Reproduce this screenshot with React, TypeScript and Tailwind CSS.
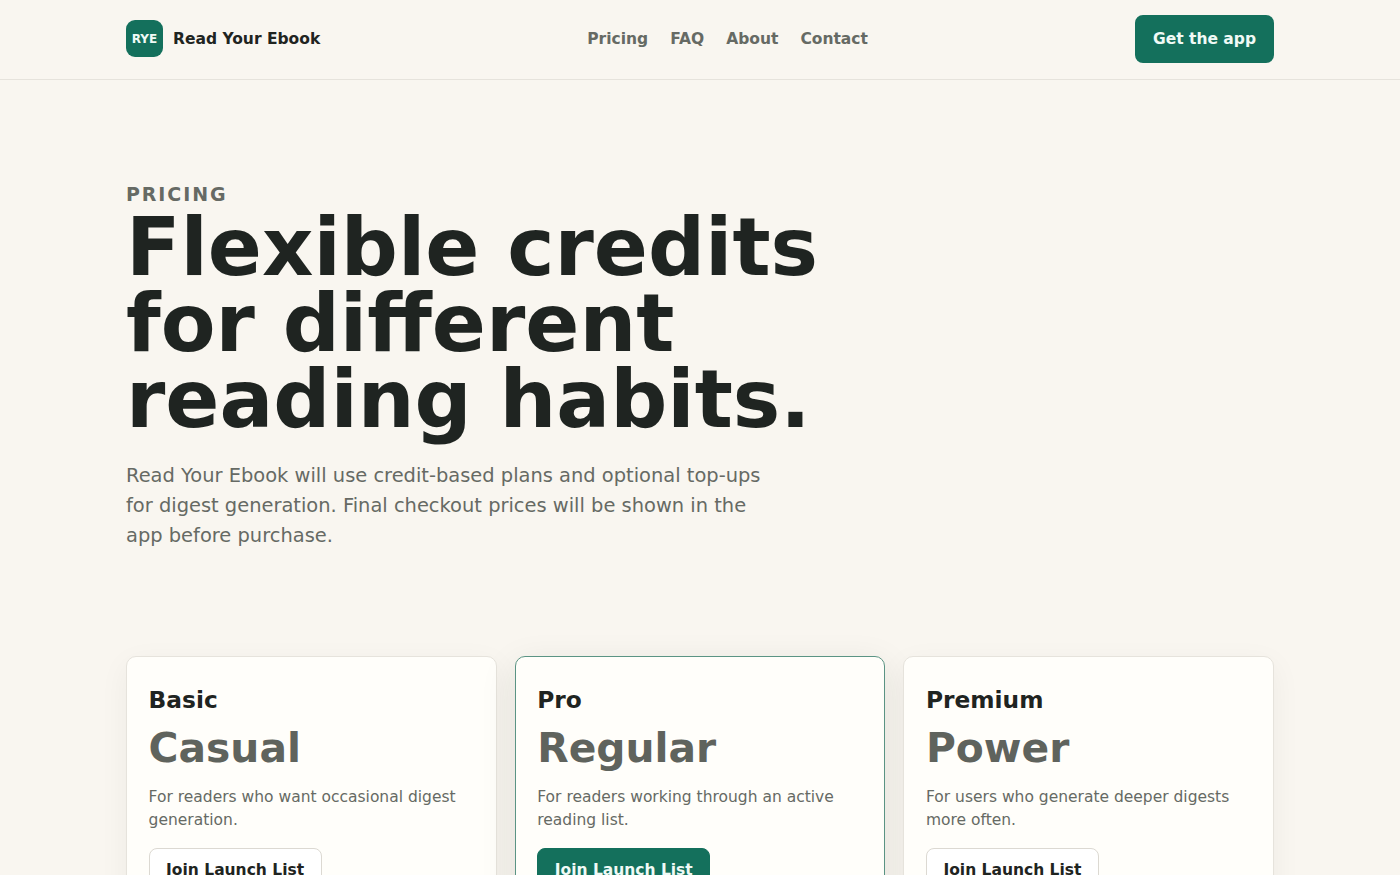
const plans = [
  { name: 'Basic', title: 'Casual', desc: 'For readers who want occasional digest generation.', featured: false },
  { name: 'Pro', title: 'Regular', desc: 'For readers working through an active reading list.', featured: true },
  { name: 'Premium', title: 'Power', desc: 'For users who generate deeper digests more often.', featured: false },
];

export default function App() {
  return (
    <div className="h-[875px] overflow-hidden bg-[#f9f6f0] text-[#1f2421] font-['DejaVu_Sans',sans-serif]">
      <header className="h-20 border-b border-[#e6e3dc]">
        <div className="mx-auto flex h-[78px] w-[1148px] items-center justify-between">
          <div className="flex items-center gap-2.5">
            <div className="mb-px flex h-[37px] w-[37px] items-center justify-center rounded-[9px] bg-[#14705c] text-xs font-bold text-[#f0faf6]">RYE</div>
            <span className="pt-px text-[15.5px] font-bold">Read Your Ebook</span>
          </div>
          <nav className="flex gap-[22px] pt-px text-[15.5px] font-semibold text-[#666a64]">
            <span>Pricing</span>
            <span>FAQ</span>
            <span>About</span>
            <span>Contact</span>
          </nav>
          <button className="h-12 rounded-lg bg-[#14705c] px-[18px] pt-px text-[15.5px] font-bold text-[#f0faf6]">Get the app</button>
        </div>
      </header>

      <main className="mx-auto w-[1148px]">
        <section className="pt-[102px]">
          <p className="text-[19px] leading-6 font-bold tracking-[0.1em] text-[#666a64]">PRICING</p>
          <h1 className="mt-[4px] max-w-[760px] text-[79.8px] leading-[76px] font-bold">Flexible credits for different reading habits.</h1>
          <p className="mt-[23px] max-w-[660px] text-[19.45px] leading-[30px] text-[#666a64]">
            Read Your Ebook will use credit-based plans and optional top-ups for digest generation. Final checkout prices will be shown in the app before purchase.
          </p>
        </section>

        <section className="mt-[105px] grid grid-cols-3 gap-[18px]">
          {plans.map(plan => (
            <div
              key={plan.name}
              className={`h-[300px] rounded-[10px] border bg-[#fffefa] p-[21.6px] ${plan.featured ? 'border-[#5b9484] shadow-[0_10px_36px_rgba(31,36,33,0.1)]' : 'border-[#e6e3dc] shadow-[0_8px_30px_rgba(31,36,33,0.05)]'}`}
            >
              <h2 className="text-[23.3px] leading-[42px] font-bold">{plan.name}</h2>
              <div className="text-[40.8px] leading-[54px] font-bold text-[#5f635d]">{plan.title}</div>
              <p className="mt-[11px] text-[15.5px] leading-[23px] text-[#666a64]">{plan.desc}</p>
              <button className={`mt-[16px] h-[46px] rounded-lg border px-[16.5px] text-[15.5px] font-bold ${plan.featured ? 'border-[#14705c] bg-[#14705c] text-[#f0faf6]' : 'border-[#dcd9d2] bg-white text-[#1f2421]'}`}>
                Join Launch List
              </button>
            </div>
          ))}
        </section>
      </main>
    </div>
  );
}
